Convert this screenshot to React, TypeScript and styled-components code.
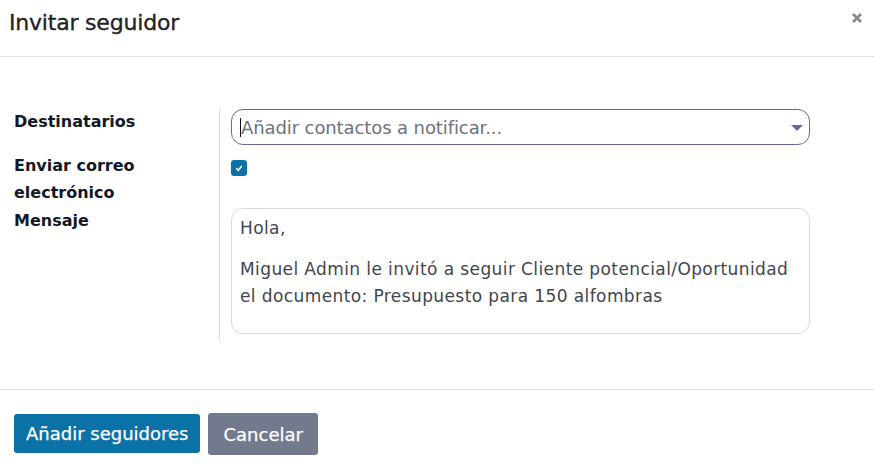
import React from "react";
import styled, { createGlobalStyle } from "styled-components";

const Global = createGlobalStyle`
  html, body { margin: 0; padding: 0; background: #fff; }
  body { font-family: "DejaVu Sans", "Liberation Sans", sans-serif; color: #212529; }
  * { box-sizing: border-box; }
`;

const Dialog = styled.div`
  width: 874px;
  height: 475px;
  display: flex;
  flex-direction: column;
  background: #fff;
`;

const Header = styled.div`
  height: 57px;
  border-bottom: 1px solid #dee2e6;
  display: flex;
  align-items: flex-start;
  justify-content: space-between;
  padding: 8px 10px 0 9px;
`;

const Title = styled.h4`
  margin: 0;
  font-size: 22px;
  font-weight: 400;
  line-height: 30px;
  letter-spacing: -0.2px;
  color: #1f2328;
  -webkit-text-stroke: 0.35px #1f2328;
`;

const Close = styled.button`
  border: 0;
  background: none;
  padding: 0;
  margin-top: 3px;
  width: 14px;
  height: 14px;
  display: flex;
  align-items: center;
  justify-content: center;
  cursor: pointer;
`;

const Body = styled.div`
  flex: 1;
  padding: 51px 64px 0 14px;
  display: grid;
  grid-template-columns: 205px 1fr;
  align-content: start;
`;

const Label = styled.div`
  font-size: 16px;
  font-weight: 700;
  line-height: 27px;
  color: #111827;
  padding-right: 10px;
`;

const Cell = styled.div<{ $pt?: number; $h?: number; $pb?: number }>`
  border-left: 1px solid #dee2e6;
  padding: ${(p) => p.$pt ?? 0}px 0 ${(p) => p.$pb ?? 0}px 11px;
  min-height: ${(p) => p.$h ?? 0}px;
`;

const SelectBox = styled.div`
  height: 36px;
  border: 1px solid #71639e;
  border-radius: 12px;
  display: flex;
  align-items: center;
  padding: 0 8px 0 8px;
  position: relative;
`;

const Caret = styled.span`
  position: absolute;
  right: 6px;
  top: 15px;
  width: 0;
  height: 0;
  border-left: 6px solid transparent;
  border-right: 6px solid transparent;
  border-top: 6px solid #71639e;
`;

const Placeholder = styled.span`
  font-size: 18px;
  letter-spacing: -0.1px;
  color: #6b7280;
  border-left: 1px solid #111;
  line-height: 19px;
`;

const Check = styled.span`
  display: inline-flex;
  width: 16px;
  height: 16px;
  border-radius: 3px;
  background: #0b72a8;
  align-items: center;
  justify-content: center;
`;

const MessageBox = styled.div`
  height: 126px;
  border: 1px solid #d8dadd;
  border-radius: 12px;
  padding: 6px 8px 0 8px;
  font-size: 17px;
  letter-spacing: 0.4px;
  line-height: 27px;
  color: #3f4650;
`;

const Para = styled.p<{ $last?: boolean }>`
  margin: 0 0 ${(p) => (p.$last ? 0 : 14)}px;
`;

const Footer = styled.div`
  height: 86px;
  border-top: 1px solid #dee2e6;
  padding: 23px 14px 0;
  display: flex;
  gap: 8px;
  align-items: flex-start;
`;

const Btn = styled.button<{ $kind: "primary" | "secondary" }>`
  border: 0;
  border-radius: 3px;
  font-family: inherit;
  font-size: 18px;
  font-weight: 400;
  -webkit-text-stroke: 0.25px #fff;
  color: #fff;
  height: ${(p) => (p.$kind === "primary" ? 39 : 42)}px;
  margin-top: ${(p) => (p.$kind === "primary" ? 1 : 0)}px;
  padding: 0 ${(p) => (p.$kind === "primary" ? 12 : 15)}px;
  background: ${(p) => (p.$kind === "primary" ? "#0b72a8" : "#747a8e")};
`;

export default function App() {
  return (
    <>
      <Global />
      <Dialog>
        <Header>
          <Title>Invitar seguidor</Title>
          <Close aria-label="Cerrar">
            <svg width="12" height="12" viewBox="0 0 12 12">
              <path d="M2 2 L10 10 M10 2 L2 10" stroke="#888" strokeWidth="2.6" strokeLinecap="butt" />
            </svg>
          </Close>
        </Header>
        <Body>
          <Label>Destinatarios</Label>
          <Cell $pt={1} $h={44}>
            <SelectBox>
              <Placeholder>Añadir contactos a notificar...</Placeholder>
              <Caret />
            </SelectBox>
          </Cell>
          <Label>
            Enviar correo
            <br />
            electrónico
          </Label>
          <Cell $pt={6} $h={55}>
            <Check>
              <svg width="10" height="10" viewBox="0 0 10 10">
                <path d="M2.2 5.2 L4.2 7.2 L7.8 3" stroke="#fff" strokeWidth="1.6" fill="none" />
              </svg>
            </Check>
          </Cell>
          <Label>Mensaje</Label>
          <Cell $pt={1} $pb={8}>
            <MessageBox>
              <Para>Hola,</Para>
              <Para $last>
                Miguel Admin le invitó a seguir Cliente potencial/Oportunidad
                <br />
                el documento: Presupuesto para 150 alfombras
              </Para>
            </MessageBox>
          </Cell>
        </Body>
        <Footer>
          <Btn $kind="primary">Añadir seguidores</Btn>
          <Btn $kind="secondary">Cancelar</Btn>
        </Footer>
      </Dialog>
    </>
  );
}
